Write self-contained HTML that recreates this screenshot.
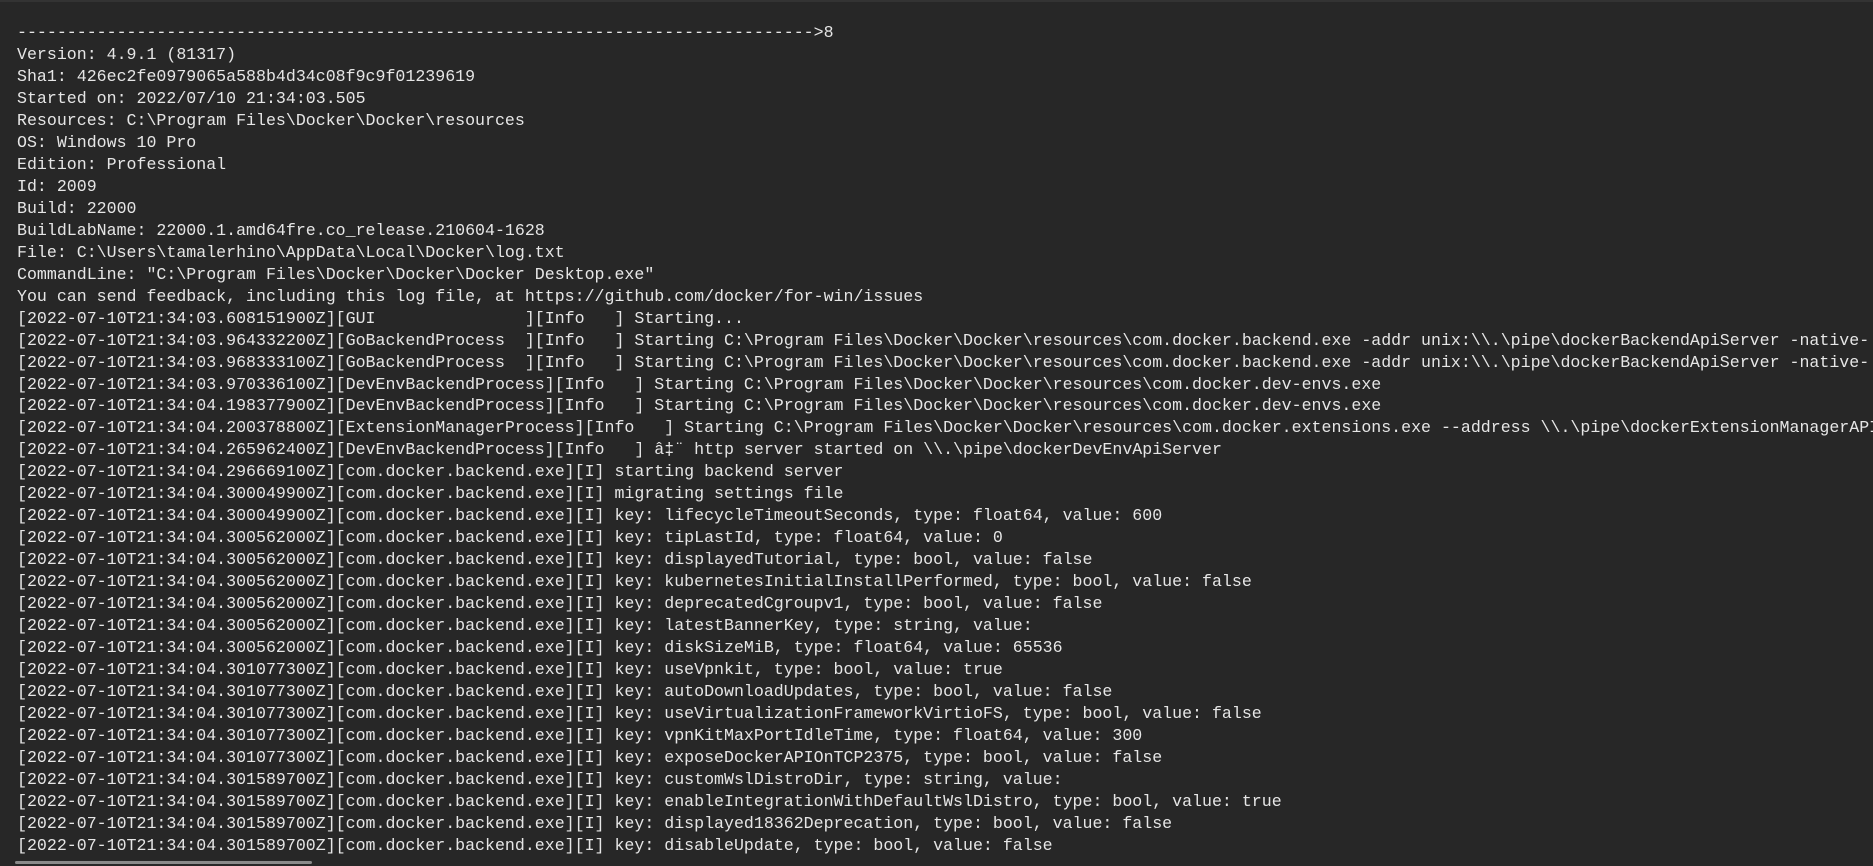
<!DOCTYPE html>
<html><head><meta charset="utf-8"><style>
html,body{margin:0;padding:0;width:1873px;height:866px;overflow:hidden;background:#272727;}
body{border-top:2px solid #333;box-sizing:border-box;}
pre{margin:0;position:absolute;left:17px;top:22px;font-family:"Liberation Mono","DejaVu Sans Mono",monospace;font-size:16.6px;line-height:21.97px;color:#e6e6e6;white-space:pre;}
.sb{position:absolute;left:15px;top:861px;width:297px;height:3px;background:#8a8a8a;border-radius:2px;}
</style></head><body>
<pre>-------------------------------------------------------------------------------->8
Version: 4.9.1 (81317)
Sha1: 426ec2fe0979065a588b4d34c08f9c9f01239619
Started on: 2022/07/10 21:34:03.505
Resources: C:\Program Files\Docker\Docker\resources
OS: Windows 10 Pro
Edition: Professional
Id: 2009
Build: 22000
BuildLabName: 22000.1.amd64fre.co_release.210604-1628
File: C:\Users\tamalerhino\AppData\Local\Docker\log.txt
CommandLine: "C:\Program Files\Docker\Docker\Docker Desktop.exe"
You can send feedback, including this log file, at https://github.com/docker/for-win/issues
[2022-07-10T21:34:03.608151900Z][GUI               ][Info   ] Starting...
[2022-07-10T21:34:03.964332200Z][GoBackendProcess  ][Info   ] Starting C:\Program Files\Docker\Docker\resources\com.docker.backend.exe -addr unix:\\.\pipe\dockerBackendApiServer -native-
[2022-07-10T21:34:03.968333100Z][GoBackendProcess  ][Info   ] Starting C:\Program Files\Docker\Docker\resources\com.docker.backend.exe -addr unix:\\.\pipe\dockerBackendApiServer -native-
[2022-07-10T21:34:03.970336100Z][DevEnvBackendProcess][Info   ] Starting C:\Program Files\Docker\Docker\resources\com.docker.dev-envs.exe
[2022-07-10T21:34:04.198377900Z][DevEnvBackendProcess][Info   ] Starting C:\Program Files\Docker\Docker\resources\com.docker.dev-envs.exe
[2022-07-10T21:34:04.200378800Z][ExtensionManagerProcess][Info   ] Starting C:\Program Files\Docker\Docker\resources\com.docker.extensions.exe --address \\.\pipe\dockerExtensionManagerAPI
[2022-07-10T21:34:04.265962400Z][DevEnvBackendProcess][Info   ] â‡¨ http server started on \\.\pipe\dockerDevEnvApiServer
[2022-07-10T21:34:04.296669100Z][com.docker.backend.exe][I] starting backend server
[2022-07-10T21:34:04.300049900Z][com.docker.backend.exe][I] migrating settings file
[2022-07-10T21:34:04.300049900Z][com.docker.backend.exe][I] key: lifecycleTimeoutSeconds, type: float64, value: 600
[2022-07-10T21:34:04.300562000Z][com.docker.backend.exe][I] key: tipLastId, type: float64, value: 0
[2022-07-10T21:34:04.300562000Z][com.docker.backend.exe][I] key: displayedTutorial, type: bool, value: false
[2022-07-10T21:34:04.300562000Z][com.docker.backend.exe][I] key: kubernetesInitialInstallPerformed, type: bool, value: false
[2022-07-10T21:34:04.300562000Z][com.docker.backend.exe][I] key: deprecatedCgroupv1, type: bool, value: false
[2022-07-10T21:34:04.300562000Z][com.docker.backend.exe][I] key: latestBannerKey, type: string, value:
[2022-07-10T21:34:04.300562000Z][com.docker.backend.exe][I] key: diskSizeMiB, type: float64, value: 65536
[2022-07-10T21:34:04.301077300Z][com.docker.backend.exe][I] key: useVpnkit, type: bool, value: true
[2022-07-10T21:34:04.301077300Z][com.docker.backend.exe][I] key: autoDownloadUpdates, type: bool, value: false
[2022-07-10T21:34:04.301077300Z][com.docker.backend.exe][I] key: useVirtualizationFrameworkVirtioFS, type: bool, value: false
[2022-07-10T21:34:04.301077300Z][com.docker.backend.exe][I] key: vpnKitMaxPortIdleTime, type: float64, value: 300
[2022-07-10T21:34:04.301077300Z][com.docker.backend.exe][I] key: exposeDockerAPIOnTCP2375, type: bool, value: false
[2022-07-10T21:34:04.301589700Z][com.docker.backend.exe][I] key: customWslDistroDir, type: string, value:
[2022-07-10T21:34:04.301589700Z][com.docker.backend.exe][I] key: enableIntegrationWithDefaultWslDistro, type: bool, value: true
[2022-07-10T21:34:04.301589700Z][com.docker.backend.exe][I] key: displayed18362Deprecation, type: bool, value: false
[2022-07-10T21:34:04.301589700Z][com.docker.backend.exe][I] key: disableUpdate, type: bool, value: false</pre>
<div class="sb"></div>
</body></html>
